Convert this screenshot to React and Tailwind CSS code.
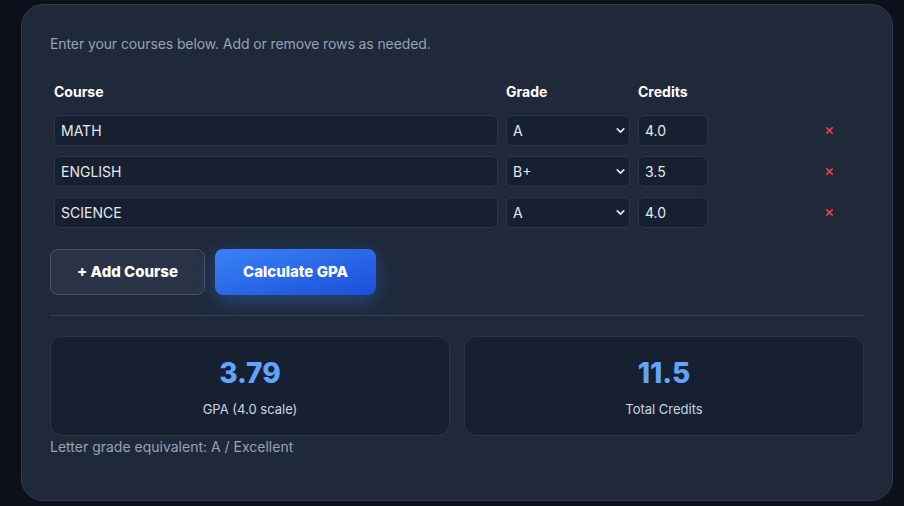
import { ChevronDown, X } from 'lucide-react';

const courses = [
  { name: 'MATH', grade: 'A', credits: '4.0' },
  { name: 'ENGLISH', grade: 'B+', credits: '3.5' },
  { name: 'SCIENCE', grade: 'A', credits: '4.0' },
];

const grades = ['A', 'A-', 'B+', 'B', 'B-', 'C+', 'C', 'C-', 'D', 'F'];

const inputCls =
  'h-[31px] w-full rounded-md border border-[#2a3546] bg-[#172031] px-[6px] text-[14px] text-[#e5e9f0] outline-none';

function CourseRow({ course }) {
  return (
    <>
      <div className="px-1">
        <input className={inputCls} defaultValue={course.name} />
      </div>
      <div className="px-1">
        <div className="relative">
          <select className={inputCls + ' appearance-none'} defaultValue={course.grade}>
            {grades.map((g) => (
              <option key={g}>{g}</option>
            ))}
          </select>
          <ChevronDown
            size={13}
            strokeWidth={3}
            className="pointer-events-none absolute right-[3px] top-[9px] text-[#e5e9f0]"
          />
        </div>
      </div>
      <div className="px-1">
        <input className={inputCls} defaultValue={course.credits} />
      </div>
      <div className="flex items-center justify-end pr-[29px]">
        <button className="text-[#ef4444]">
          <X size={11} strokeWidth={3.5} />
        </button>
      </div>
    </>
  );
}

export default function App() {
  return (
    <div
      className="min-h-screen bg-[#0b101b] pl-[21px] pt-1"
      style={{ fontFamily: 'Inter, "Noto Sans", sans-serif' }}
    >
      <div className="h-[497px] w-[872px] rounded-[22px] border border-[#303b4d] bg-[#1f293a] px-7 pt-7">
        <p className="text-[14px] leading-[22px] tracking-[-0.1px] text-[#94a3b8]">
          Enter your courses below. Add or remove rows as needed.
        </p>

        <div className="mt-[27px] grid grid-cols-[452px_132px_78px_1fr] gap-y-[10px]">
          <div className="mb-[3px] px-1 text-[14px] font-bold leading-5 text-white">Course</div>
          <div className="mb-[3px] px-1 text-[14px] font-bold leading-5 text-white">Grade</div>
          <div className="mb-[3px] px-1 text-[14px] font-bold leading-5 text-white">Credits</div>
          <div />
          {courses.map((c) => (
            <CourseRow key={c.name} course={c} />
          ))}
        </div>

        <div className="mt-[21px] flex gap-[10px]">
          <button className="h-[46px] w-[155px] rounded-lg border border-[#475264] bg-[#293345] text-[15px] font-extrabold text-white">
            + Add Course
          </button>
          <button className="h-[46px] w-[161px] rounded-lg bg-gradient-to-br from-[#3b82f6] to-[#1d4ed8] text-[15px] font-extrabold text-white shadow-[0_6px_20px_rgba(59,130,246,0.35)]">
            Calculate GPA
          </button>
        </div>

        <div className="mt-5 h-px bg-[#334155]" />

        <div className="mt-5 grid grid-cols-2 gap-[14px]">
          <div className="flex h-[100px] flex-col items-center rounded-xl border border-[#2a3546] bg-[#172031] pt-5">
            <div className="text-[28px] font-extrabold leading-8 text-[#60a5fa]">3.79</div>
            <div className="mt-[11px] text-[13px] leading-[18px] text-[#cbd5e1]">GPA (4.0 scale)</div>
          </div>
          <div className="flex h-[100px] flex-col items-center rounded-xl border border-[#2a3546] bg-[#172031] pt-5">
            <div className="text-[28px] font-extrabold leading-8 text-[#60a5fa]">11.5</div>
            <div className="mt-[11px] text-[13px] leading-[18px] text-[#cbd5e1]">Total Credits</div>
          </div>
        </div>

        <p className="mt-px text-[14px] leading-5 text-[#94a3b8]">
          Letter grade equivalent: A / Excellent
        </p>
      </div>
    </div>
  );
}
